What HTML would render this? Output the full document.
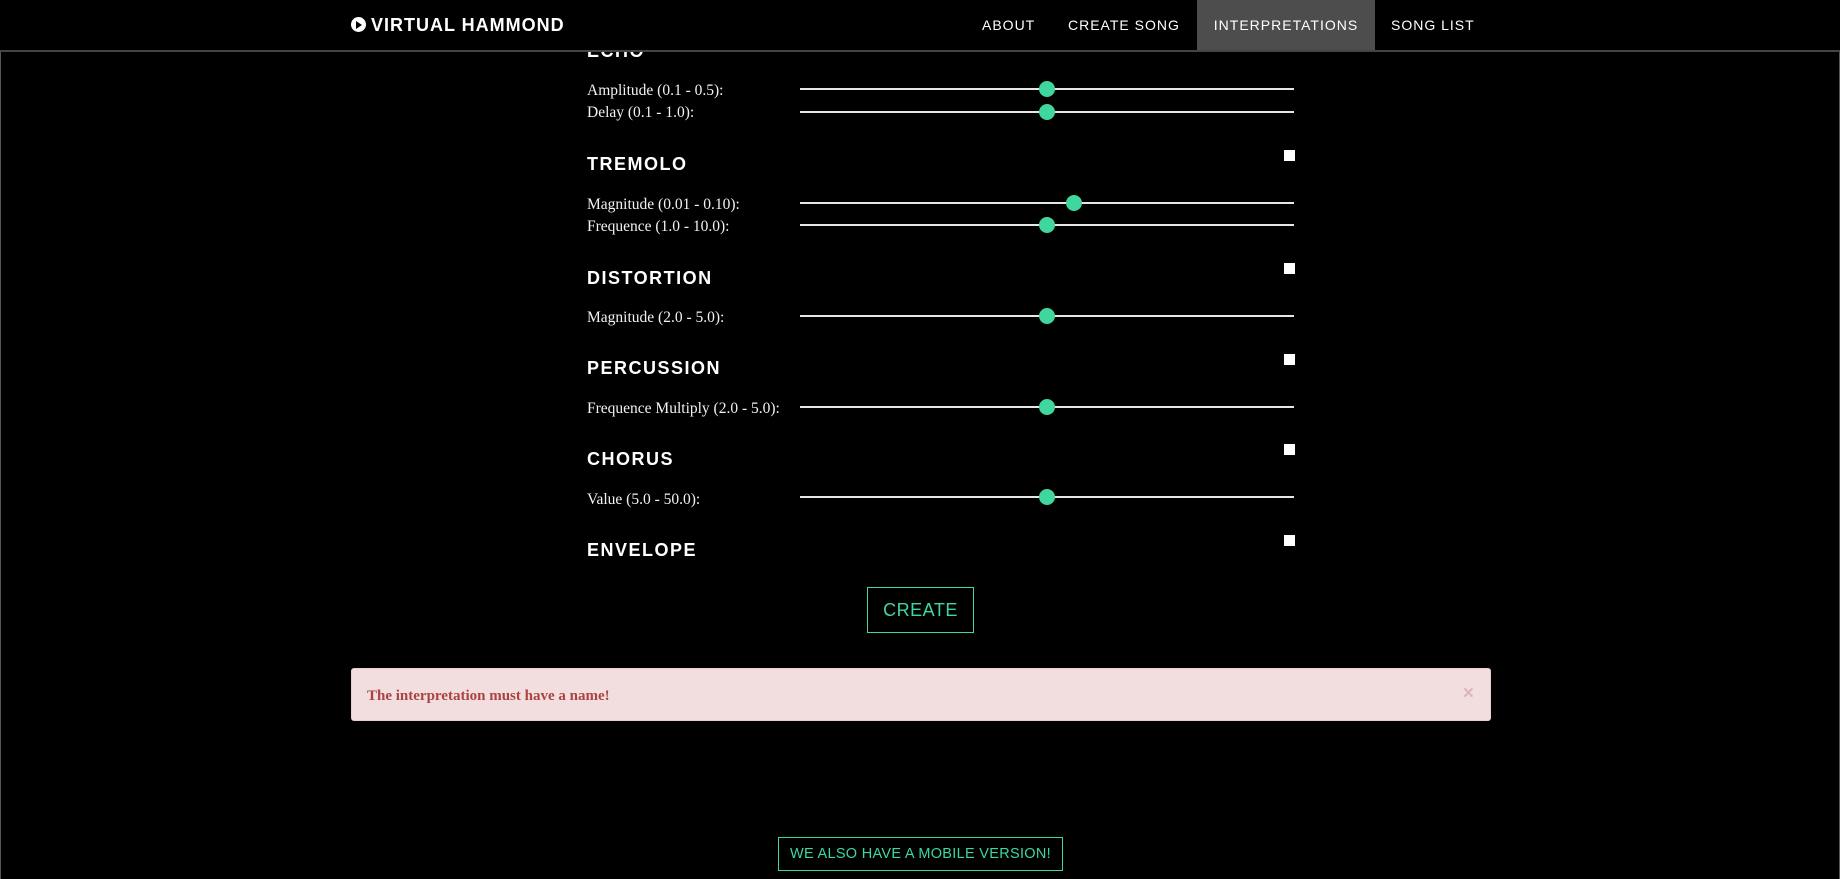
<!DOCTYPE html>
<html><head><meta charset="utf-8"><style>
*{margin:0;padding:0;box-sizing:border-box}
body{width:1840px;height:879px;background:#000;position:relative;overflow:hidden;font-family:"Liberation Sans",sans-serif;color:#fff}
.nav{position:absolute;left:0;top:0;width:1840px;height:52px;background:#000;border-bottom:2px solid #444;z-index:2}
.logo{position:absolute;left:351px;top:15px;font-size:18px;font-weight:bold;letter-spacing:1px;white-space:nowrap}
.logo .ic{display:inline-block;width:15px;height:15px;border-radius:50%;background:#fff;position:relative;vertical-align:-1px;margin-right:5px}
.logo .ic:after{content:"";position:absolute;left:5px;top:3.5px;border-left:6px solid #000;border-top:4px solid transparent;border-bottom:4px solid transparent}
.nl{position:absolute;top:0;height:50px;line-height:51px;font-size:14px;letter-spacing:1px;white-space:nowrap}
.act{background:#4d4d4d}
.sideL{position:absolute;left:0;top:50px;width:1px;height:829px;background:#555}
.sideR{position:absolute;right:0;top:50px;width:1px;height:829px;background:#555}
h3{position:absolute;left:587px;font-size:18px;font-weight:bold;letter-spacing:1.5px;line-height:20px}
.lab{position:absolute;left:587px;font-family:"Liberation Serif",serif;font-size:15.5px;line-height:18px;color:#f2f2f2;white-space:nowrap}
.tr{position:absolute;left:800px;width:494px;height:2px;background:#e6e6e6}
.th{position:absolute;width:16px;height:16px;border-radius:50%;background:#3fd79e;top:-7px}
.cb{position:absolute;left:1284px;width:11px;height:11px;background:#fff}
</style></head><body>
<div class="nav">
<div class="logo"><span class="ic"></span>VIRTUAL HAMMOND</div>
<div class="nl" style="left:982px">ABOUT</div>
<div class="nl" style="left:1068px">CREATE SONG</div>
<div class="nl act" style="left:1197px;width:178px;text-align:center">INTERPRETATIONS</div>
<div class="nl" style="left:1391px">SONG LIST</div>
</div>
<div class="sideL"></div><div class="sideR"></div>

<h3 style="top:41px">ECHO</h3>
<div class="lab" style="top:82px">Amplitude (0.1 - 0.5):</div>
<div class="tr" style="top:88px"><div class="th" style="left:239px"></div></div>
<div class="lab" style="top:104px">Delay (0.1 - 1.0):</div>
<div class="tr" style="top:111px"><div class="th" style="left:239px"></div></div>

<h3 style="top:154px">TREMOLO</h3><div class="cb" style="top:150px"></div>
<div class="lab" style="top:196px">Magnitude (0.01 - 0.10):</div>
<div class="tr" style="top:202px"><div class="th" style="left:266px"></div></div>
<div class="lab" style="top:218px">Frequence (1.0 - 10.0):</div>
<div class="tr" style="top:224px"><div class="th" style="left:239px"></div></div>

<h3 style="top:268px">DISTORTION</h3><div class="cb" style="top:263px"></div>
<div class="lab" style="top:309px">Magnitude (2.0 - 5.0):</div>
<div class="tr" style="top:315px"><div class="th" style="left:239px"></div></div>

<h3 style="top:358px">PERCUSSION</h3><div class="cb" style="top:354px"></div>
<div class="lab" style="top:400px">Frequence Multiply (2.0 - 5.0):</div>
<div class="tr" style="top:406px"><div class="th" style="left:239px"></div></div>

<h3 style="top:449px">CHORUS</h3><div class="cb" style="top:444px"></div>
<div class="lab" style="top:491px">Value (5.0 - 50.0):</div>
<div class="tr" style="top:496px"><div class="th" style="left:239px"></div></div>

<h3 style="top:540px">ENVELOPE</h3><div class="cb" style="top:535px"></div>

<div style="position:absolute;left:867px;top:587px;width:107px;height:46px;border:1px solid #3fd79e;color:#3fd79e;font-size:18px;text-align:center;line-height:45px;letter-spacing:.5px">CREATE</div>

<div style="position:absolute;left:351px;top:668px;width:1140px;height:53px;background:#f2dede;border:1px solid #ebccd1;border-radius:3px">
<div style="position:absolute;left:15px;top:19px;font-family:'Liberation Serif',serif;font-weight:bold;font-size:15px;color:#a94442">The interpretation must have a name!</div>
<div style="position:absolute;right:16px;top:14px;font-size:19px;color:#d9b8b8;font-weight:bold">×</div>
</div>

<div style="position:absolute;left:778px;top:837px;width:285px;height:34px;border:1px solid #3fd79e;color:#3fd79e;font-size:14.5px;text-align:center;line-height:33px;letter-spacing:.3px">WE ALSO HAVE A MOBILE VERSION!</div>
</body></html>
